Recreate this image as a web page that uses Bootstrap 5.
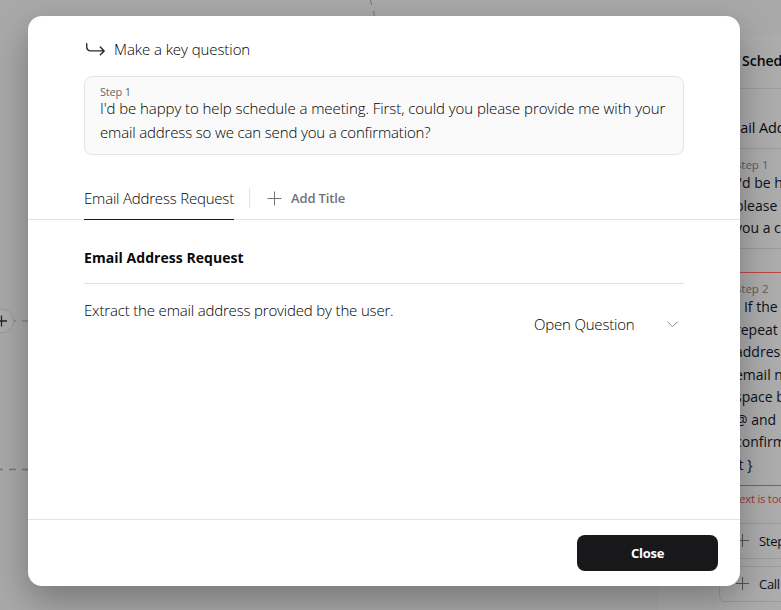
<!DOCTYPE html>
<html lang="en">
<head>
<meta charset="utf-8">
<meta name="viewport" content="width=device-width, initial-scale=1">
<title>Make a key question</title>
<link href="https://cdn.jsdelivr.net/npm/bootstrap@5.3.0/dist/css/bootstrap.min.css" rel="stylesheet">
<style>
body{width:781px;height:610px;overflow:hidden;background:#fff;font-family:"Open Sans","Noto Sans",sans-serif;font-size:15px;line-height:24px;color:#18181b}
svg{display:block;flex:none}
.flow{position:absolute;inset:0;background:#a9a9a9;overflow:hidden}
.flow-lines{position:absolute;inset:0}
.side{position:absolute;left:659px;top:35px;width:122px;height:575px;overflow:hidden;background:#acacac;font-size:14px;line-height:22.5px;color:#0b101c;white-space:nowrap}
.side-head{height:54px;border-bottom:1px solid #9d9d9d;padding-left:83px;font-weight:600;font-size:14px;color:#09090b;padding-bottom:1px}
.side-main{padding-left:60px;width:320px}
.side-name{height:59px;padding:28px 0 0 0;color:#09090b;font-size:14.5px;letter-spacing:-.1px}
.step-box{border:1px solid #999;border-radius:6px;padding:4px 15px 0;height:101px}
.step-box.invalid{border:1px solid #c04442;margin-top:23px;height:214px}
.step-label{font-size:11.5px;line-height:23px;color:#5a5e5e;height:19px;display:block}
.fault{color:#a8343a;font-size:11.5px;letter-spacing:-.3px;padding-left:14px;height:37px;padding-top:2px}
.side-btn{height:36px;border:1px solid #9a9a9a;border-radius:6px;padding-left:16px;gap:9px;font-size:13px;letter-spacing:-.3px;font-weight:500;margin-bottom:7px}
.dialog{position:absolute;left:28px;top:16px;width:712px;height:570px;background:#fff;border-radius:14px;box-shadow:0 14px 36px rgba(0,0,0,.3)}
.dlg-top{padding:21px 56px 0}
.dlg-title{height:25px;gap:8px;padding-left:1px;letter-spacing:-.07px}
.dlg-title span{padding-bottom:2px}
.quote{margin-top:14px;height:79px;background:#fafafa;border:1px solid #e4e4e7;border-radius:8px;padding:5px 15px;color:#0c0f1c;white-space:nowrap;letter-spacing:-.07px}
.quote-end{letter-spacing:-.15px}
.quote-label{font-size:11px;line-height:20px;height:14px;color:#66666c;display:block;font-weight:400;letter-spacing:-.2px}
.tabs-bar{margin-top:23px;height:42px;border-bottom:1px solid #e4e4e7;padding:0 56px}
.tab-on{height:42px;line-height:41px;border-bottom:1px solid #18181b;white-space:nowrap;width:150px;letter-spacing:-.2px}
.tab-sep{width:1px;height:20px;background:#e4e4e7;margin:10px 17px 0 15px}
.tab-add{height:40px;gap:9px;color:#71717a;font-weight:600;font-size:13px;letter-spacing:-.15px}
.dlg-body{padding:0 56px;height:299px}
.sec-title{height:64px;line-height:75px;border-bottom:1px solid #e4e4e7;font-weight:700;color:#09090b;font-size:14px;letter-spacing:.05px}
.lead-note{padding-top:14px;letter-spacing:-.17px}
.pick{width:144px;margin:28px 6px 0 0;letter-spacing:-.19px}
.dlg-foot{height:67px;border-top:1px solid #e4e4e7;padding:15px 22px}
.btn-close-dlg{width:141px;height:36px;background:#18181b;color:#fff;border-radius:8px;font-size:13px;font-weight:700;line-height:24px;letter-spacing:-.25px;border:0}
.thin{font-weight:300;color:#000}
</style>
</head>
<body>
<div class="flow">
  <svg class="flow-lines" width="781" height="610" fill="none">
    <path d="M370.500 0l1 5M373.500 11l1 6" stroke="#777"/>
    <path d="M0 469.500h28" stroke="#777" stroke-width="1.5" stroke-dasharray="7 6" stroke-dashoffset="4"/>
    <path d="M14 321h2M22 321h6" stroke="#858585" stroke-width="1.5"/>
    <circle cx="1.5" cy="321" r="12" fill="#acacac" stroke="#999"/>
    <path d="M-4 321H7M1.500 315.500v11" stroke="#222" stroke-width="1.3"/>
  </svg>
  <aside class="side">
    <div class="side-head d-flex align-items-center"><span>Schedule</span></div>
    <div class="side-main">
      <div class="side-name">Email Address Request</div>
      <div class="step-box"><span class="step-label">Step 1</span>I'd be happy to help. Could you<br>please provide the email so I send<br>you a confirmation?</div>
      <div class="step-box invalid"><span class="step-label">Step 2</span>{ If the<br>repeat<br>address, and confirm the<br>email named, with a<br>space between the<br>@ and<br>confirm it, and save<br>it }</div>
      <div class="fault">Text is too long</div>
      <div class="side-btn d-flex align-items-center"><svg width="14" height="14" stroke="#555" fill="none"><path d="M0 6.500h13M6.500 0v13"/></svg><span>Step</span></div>
      <div class="side-btn d-flex align-items-center"><svg width="14" height="14" stroke="#555" fill="none"><path d="M0 6.500h13M6.500 0v13"/></svg><span>Call</span></div>
    </div>
  </aside>
</div>
<div class="dialog d-flex flex-column" role="dialog">
  <div class="dlg-top">
    <div class="dlg-title d-flex align-items-center thin">
      <svg width="21" height="16" fill="none" stroke="#27272a" stroke-width="1.4" stroke-linecap="round" stroke-linejoin="round"><path d="M1.700 1.800v2.700c0 2.800 1.400 4.400 4.200 4.400h13M15.300 5l3.900 3.900-3.900 3.900"/></svg>
      <span>Make a key question</span>
    </div>
    <div class="quote thin"><span class="quote-label">Step 1</span><span>I'd be happy to help schedule a meeting. First, could you please provide me with your</span><br><span class="quote-end">email address so we can send you a confirmation?</span></div>
  </div>
  <div class="tabs-bar d-flex">
    <div class="tab-on thin">Email Address Request</div>
    <div class="tab-sep"></div>
    <div class="tab-add d-flex align-items-center"><svg width="15" height="15" fill="none" stroke="#71717a"><path d="M.5 7.500h14M7.500 .5v14"/></svg><span>Add Title</span></div>
  </div>
  <div class="dlg-body">
    <div class="sec-title">Email Address Request</div>
    <div class="d-flex justify-content-between">
      <div class="thin lead-note">Extract the email address provided by the user.</div>
      <div class="pick d-flex align-items-center justify-content-between thin"><span>Open Question</span><svg width="11" height="7" fill="none" stroke="#85858c" stroke-linecap="round" stroke-linejoin="round"><path d="M.7.9l4.800 4.800L10.300.9"/></svg></div>
    </div>
  </div>
  <div class="dlg-foot d-flex justify-content-end"><button class="btn btn-close-dlg">Close</button></div>
</div>
<script src="https://cdn.jsdelivr.net/npm/bootstrap@5.3.0/dist/js/bootstrap.bundle.min.js"></script>
</body>
</html>
